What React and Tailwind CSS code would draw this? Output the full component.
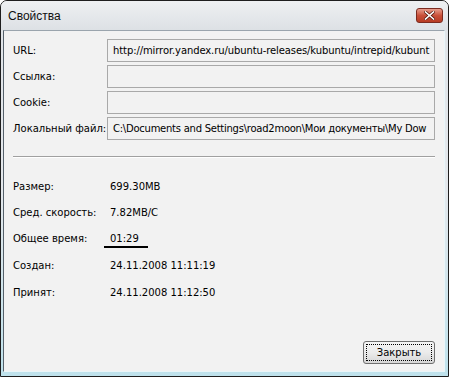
import React from "react";

const fields = [
  { label: "URL:", value: "http://mirror.yandex.ru/ubuntu-releases/kubuntu/intrepid/kubunt", track: "tracking-[-0.1px]" },
  { label: "Ссылка:", value: "", track: "" },
  { label: "Cookie:", value: "", track: "" },
  { label: "Локальный файл:", value: "C:\\Documents and Settings\\road2moon\\Мои документы\\My Dow", track: "tracking-[-0.25px]" },
];

const stats = [
  { label: "Размер:", value: "699.30MB", h: "h-[26px]" },
  { label: "Сред. скорость:", value: "7.82MB/C", h: "h-[26px]" },
  { label: "Общее время:", value: "01:29", h: "h-[27px]", mark: true },
  { label: "Создан:", value: "24.11.2008 11:11:19", h: "h-[27px]" },
  { label: "Принят:", value: "24.11.2008 11:12:50", h: "h-[26px]" },
];

export default function App() {
  return (
    <div className="w-[449px] h-[377px] bg-white">
      <div
        className="w-[449px] h-[377px] flex flex-col border border-[#1e1e1e] rounded-t-[7px] overflow-hidden bg-gradient-to-b from-[#dfe3e7] via-[#e4e8ec] to-[#bfe2ec] text-black"
        style={{ fontFamily: '"DejaVu Sans", Verdana, sans-serif' }}
      >
        {/* Title bar */}
        <div className="h-[29px] flex items-center justify-between pl-[7px] pr-[5px] bg-gradient-to-b from-[#eef0f2] to-[#dde1e5] shrink-0">
          <span
            className="text-[12px] text-[#111]"
            style={{ fontFamily: '"Liberation Sans", Arial, sans-serif' }}
          >
            Свойства
          </span>
          <div className="w-[27px] h-[15px] rounded-[3px] border border-[#7a2a1f] bg-gradient-to-b from-[#e69c8c] via-[#c9503a] to-[#b73a22] flex items-center justify-center">
            <svg width="11" height="9" viewBox="0 0 11 9">
              <path d="M1.5 1 L9.5 8 M9.5 1 L1.5 8" stroke="#5a1a10" strokeWidth="3" strokeLinecap="square" />
              <path d="M1.5 1 L9.5 8 M9.5 1 L1.5 8" stroke="#fff" strokeWidth="1.6" strokeLinecap="square" />
            </svg>
          </div>
        </div>

        {/* Client area */}
        <div className="flex-1 ml-[2px] mr-[3px] mb-[4px] flex flex-col bg-[#f2f2f2] border-l border-l-[#55606a] border-t border-t-[#9aa4ad] border-r border-r-[#eaf6f9] border-b border-b-[#eaf6f9] text-[10px]">
          <div className="pt-[8px] pl-[9px] pr-[9px] flex flex-col gap-[3px]">
            {fields.map((f) => (
              <div key={f.label} className="flex items-center">
                <span className="w-[94px] shrink-0">{f.label}</span>
                <div className={`flex-1 h-[23px] border border-[#a9a9a9] bg-[#f2f2f2] flex items-center pl-[5px] overflow-hidden whitespace-nowrap ${f.track}`}>
                  {f.value}
                </div>
              </div>
            ))}
          </div>

          {/* Separator */}
          <div className="mx-[9px] mt-[16px] border-t border-[#a0a0a0] border-b border-b-white" />

          <div className="pl-[9px] pt-[15px] flex flex-col">
            {stats.map((s) => (
              <div key={s.label} className={`flex items-center ${s.h}`}>
                <span className="w-[97px] shrink-0">{s.label}</span>
                <span className="relative">
                  {s.value}
                  {s.mark && (
                    <span className="absolute left-[-6px] top-[15px] w-[44px] h-[2px] bg-black" />
                  )}
                </span>
              </div>
            ))}
          </div>

          {/* Close button */}
          <div className="mt-auto flex justify-end pr-[9px] pb-[7px]">
            <button className="w-[72px] h-[23px] rounded-[3px] border border-[#6f6f6f] bg-gradient-to-b from-[#f4f4f4] via-[#ebebeb] to-[#d6d6d6] p-[2px]">
              <div className="w-full h-full border border-dotted border-black flex items-center justify-center text-[10px]">
                Закрыть
              </div>
            </button>
          </div>
        </div>
      </div>
    </div>
  );
}
